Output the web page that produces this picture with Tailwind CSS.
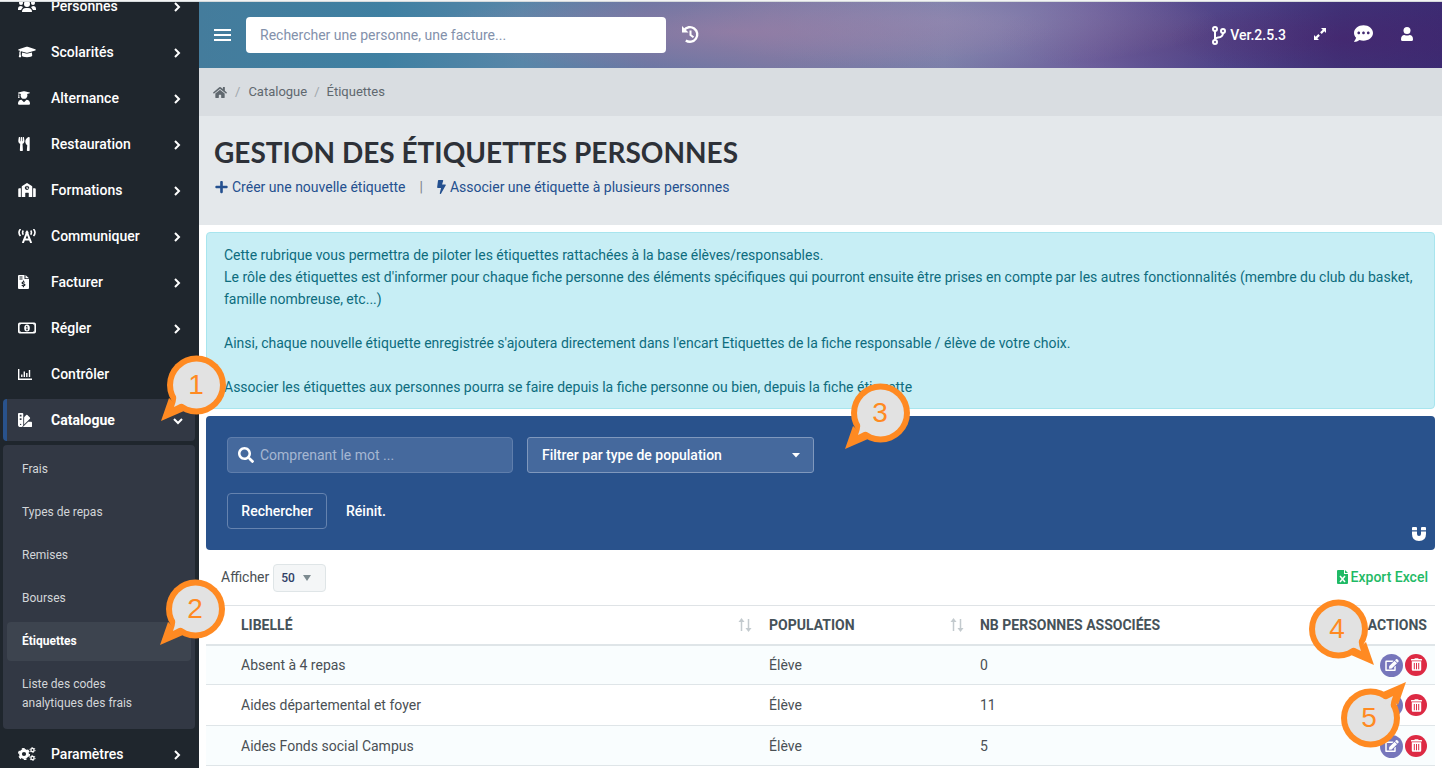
<!DOCTYPE html>
<html lang="fr">
<head>
<meta charset="utf-8">
<title>Gestion des étiquettes personnes</title>
<script src="https://cdn.jsdelivr.net/npm/@tailwindcss/browser@4"></script>
</head>
<body class="relative flex h-screen flex-col overflow-hidden bg-white font-['Roboto',sans-serif] text-sm text-[#4a5055]">
<svg class="hidden">
  <symbol id="chev" viewBox="0 0 8 10"><path d="M2 1l4 4-4 4" fill="none" stroke="currentColor" stroke-width="2"/></symbol>
  <symbol id="edit" viewBox="0 0 576 512"><path fill="currentColor" d="M402.6 83.2l90.2 90.2c3.8 3.8 3.8 10 0 13.8L274.4 405.6l-92.8 10.3c-12.4 1.4-22.9-9.1-21.5-21.5l10.3-92.8L388.8 83.2c3.8-3.8 10-3.8 13.8 0zm162-22.9l-48.8-48.8c-15.2-15.2-39.9-15.2-55.2 0l-35.4 35.4c-3.8 3.8-3.8 10 0 13.8l90.2 90.2c3.8 3.8 10 3.8 13.8 0l35.4-35.4c15.2-15.3 15.2-40 0-55.2zM384 346.2V448H64V128h229.8c3.2 0 6.2-1.3 8.5-3.5l40-40c7.6-7.6 2.2-20.5-8.500-20.500H48C21.500 64 0 85.500 0 112v352c0 26.500 21.500 48 48 48h352c26.500 0 48-21.500 48-48V306.200c0-10.700-12.900-16-20.500-8.500l-40 40c-2.200 2.300-3.500 5.300-3.500 8.500z"/></symbol>
  <symbol id="trash" viewBox="0 0 448 512"><path fill="currentColor" fill-rule="evenodd" d="M32 464a48 48 0 0 0 48 48h288a48 48 0 0 0 48-48V128H32zm262-270h40v256h-40zm-90 0h40v256h-40zm-90 0h40v256h-40zM432 32H312l-9.400-18.700A24 24 0 0 0 281.100 0H166.800a23.720 23.720 0 0 0-21.400 13.300L136 32H16A16 16 0 0 0 0 48v32a16 16 0 0 0 16 16h416a16 16 0 0 0 16-16V48a16 16 0 0 0-16-16z"/></symbol>
  <symbol id="sort" viewBox="0 0 14 14"><path d="M3.500 13V3M10.500 1v10" stroke="#c3cace" stroke-width="1.500" fill="none"/><path d="M3.500 0L6.500 4h-6zM10.500 14l3-4h-6z" fill="#c3cace"/></symbol>
  <symbol id="bubble" viewBox="0 0 68 68"><path d="M9 43L1 66l23-10z" fill="#ff8a22"/><circle cx="36.500" cy="30" r="29.500" fill="#ff8a22"/><circle cx="36.500" cy="30" r="23.500" fill="#e2e2e2"/><path d="M15 37q3 5-1 15l6-3q3-1 8 2z" fill="#e2e2e2"/></symbol>
</svg>

<div class="h-[2px] shrink-0 border-b border-[#d5dadc] bg-[#f3f4f4]"></div>
<div class="flex min-h-0 flex-1">

<aside class="w-[199px] shrink-0 overflow-hidden bg-[#1f262d] text-white">
<nav class="-mt-[19px] font-medium">
  <a href="#" class="flex h-[46px] items-center px-[18px]"><svg class="h-4 w-[18px]" viewBox="0 0 18 16" fill="currentColor"><circle cx="3" cy="5" r="2"/><circle cx="15" cy="5" r="2"/><circle cx="9" cy="6" r="3"/><path d="M0 11q0-3 3-3l2 1-2 3H0zM18 11q0-3-3-3l-2 1 2 3h3zM4 14q0-4 4-4h2q4 0 4 4H4z"/></svg><span class="ml-[15px] flex-1">Personnes</span><svg class="mt-[2px] h-[10px] w-2"><use href="#chev"/></svg></a>
  <a href="#" class="flex h-[46px] items-center px-[18px]"><svg class="h-[14px] w-[18px]" viewBox="0 0 640 512" fill="currentColor"><path d="M622.340 153.200L343.400 67.500c-15.200-4.670-31.600-4.670-46.790 0L17.660 153.200c-23.540 7.230-23.540 38.360 0 45.590l48.630 14.940c-10.670 13.190-17.230 29.280-17.880 46.900C38.780 266.150 32 276.110 32 288c0 10.780 5.680 19.850 13.860 25.650L20.330 428.530C18.110 438.520 25.710 448 35.940 448h56.110c10.240 0 17.840-9.480 15.620-19.470L82.140 313.650C90.320 307.850 96 298.780 96 288c0-11.570-6.470-21.250-15.660-26.870.76-15.020 8.440-28.300 20.690-36.720L296.600 284.500c9.060 2.780 26.440 6.250 46.790 0l278.950-85.700c23.550-7.240 23.550-38.360 0-45.600zM352.790 315.090c-28.530 8.760-52.840 3.920-65.590 0l-145.020-44.550L128 384c0 35.350 85.960 64 192 64s192-28.650 192-64l-14.180-113.470-145.030 44.560z"/></svg><span class="ml-[15px] flex-1">Scolarités</span><svg class="mt-[2px] h-[10px] w-2"><use href="#chev"/></svg></a>
  <a href="#" class="flex h-[46px] items-center px-[18px]"><span class="w-[18px]"><svg class="h-[14px] w-3" viewBox="0 0 448 512" fill="currentColor"><path d="M319.400 320.600L224 416l-95.400-95.400C57.100 323.700 0 382.200 0 454.400v9.600c0 26.500 21.500 48 48 48h352c26.500 0 48-21.500 48-48v-9.600c0-72.200-57.100-130.700-128.600-133.800zM13.600 79.800l6.400 1.500v58.400c-7 4.200-12 11.500-12 20.300 0 8.400 4.600 15.400 11.100 19.700L3.500 242c-1.700 6.900 2.100 14 7.600 14h41.800c5.500 0 9.300-7.100 7.600-14l-15.600-62.300C51.400 175.400 56 168.400 56 160c0-8.800-5-16.100-12-20.300V87.100l66 15.900c-8.600 17.200-14 36.400-14 57 0 70.700 57.300 128 128 128s128-57.300 128-128c0-20.600-5.300-39.800-14-57l96.300-23.200c18.200-4.400 18.200-27.100 0-31.500l-190.400-46c-13-3.100-26.700-3.100-39.700 0L13.600 48.200c-18.100 4.400-18.100 27.200 0 31.600z"/></svg></span><span class="ml-[15px] flex-1">Alternance</span><svg class="mt-[2px] h-[10px] w-2"><use href="#chev"/></svg></a>
  <a href="#" class="flex h-[46px] items-center px-[18px]"><span class="w-[18px]"><svg class="h-[14px] w-3" viewBox="0 0 416 512" fill="currentColor"><path d="M207.900 15.200c.8 4.700 16.100 94.500 16.100 128.800 0 52.300-27.800 89.600-68.900 104.600L168 486.700c.7 13.700-10.200 25.300-24 25.300H80c-13.700 0-24.700-11.500-24-25.300l12.900-238.100C27.700 233.600 0 196.200 0 144 0 109.600 15.300 19.900 16.100 15.200 19.300-5.100 61.400-5.400 64 16.300v141.200c1.300 3.400 15.100 3.200 16 0 1.400-25.300 7.900-139.200 8-141.800 3.300-20.800 44.700-20.800 47.900 0 .2 2.700 6.600 116.500 8 141.800.9 3.200 14.800 3.400 16 0V16.300c2.600-21.600 44.800-21.400 48-1.100zm119.200 285.700l-15 185.100c-1.200 14 9.900 26 23.900 26h56c13.300 0 24-10.700 24-24V24c0-13.200-10.700-24-24-24-82.500 0-221.400 178.500-64.900 300.900z"/></svg></span><span class="ml-[15px] flex-1">Restauration</span><svg class="mt-[2px] h-[10px] w-2"><use href="#chev"/></svg></a>
  <a href="#" class="flex h-[46px] items-center px-[18px]"><svg class="h-[14px] w-[18px]" viewBox="0 0 640 512" fill="currentColor"><path d="M0 224v272c0 8.840 7.160 16 16 16h80V192H32c-17.670 0-32 14.330-32 32zm360-48h-24v-40c0-4.420-3.580-8-8-8h-16c-4.420 0-8 3.580-8 8v64c0 4.420 3.580 8 8 8h48c4.420 0 8-3.580 8-8v-16c0-4.420-3.580-8-8-8zm137.750-63.960l-160-106.670a32.020 32.020 0 0 0-35.500 0l-160 106.670A32.002 32.002 0 0 0 128 138.660V512h128V368c0-8.840 7.160-16 16-16h96c8.840 0 16 7.160 16 16v144h128V138.670c0-10.700-5.350-20.700-14.250-26.630zM320 256c-44.180 0-80-35.820-80-80s35.820-80 80-80 80 35.820 80 80-35.820 80-80 80zm288-64h-64v320h80c8.840 0 16-7.160 16-16V224c0-17.670-14.330-32-32-32z"/></svg><span class="ml-[15px] flex-1">Formations</span><svg class="mt-[2px] h-[10px] w-2"><use href="#chev"/></svg></a>
  <a href="#" class="flex h-[46px] items-center px-[18px]"><svg class="h-[14px] w-[18px]" viewBox="0 0 18 14" fill="none" stroke="currentColor" stroke-width="1.600"><path d="M2.500 0q-3 3.500 0 7M5.300 1.500q-1.500 2 0 4.300M15.500 0q3 3.500 0 7M12.700 1.500q1.500 2 0 4.300"/><path d="M4.800 14L9 3.500 13.200 14M6.500 10.500h5" stroke-width="2"/><circle cx="9" cy="3.500" r="1.500" fill="currentColor" stroke="none"/></svg><span class="ml-[15px] flex-1">Communiquer</span><svg class="mt-[2px] h-[10px] w-2"><use href="#chev"/></svg></a>
  <a href="#" class="flex h-[46px] items-center px-[18px]"><span class="w-[18px]"><svg class="h-[14px] w-[11px]" viewBox="0 0 11 14" fill="currentColor"><path fill-rule="evenodd" d="M1 0h5.500v4H11v9q0 1-1 1H1q-1 0-1-1V1q0-1 1-1zm.5 1.500v1h3v-1zm0 2v1h3v-1zM5 5.500v1Q3.500 6.800 3.500 8q0 .8 1.300 1.200 1.700.3.900.9-.7.300-1.700-.3l-.5.900q.8.500 1.500.6v1h1v-1q1.500-.3 1.500-1.500 0-1-1.500-1.300-1.600-.4-.8-.9.600-.3 1.300.1l.5-.8L6 6.500v-1z"/><path d="M7.500 0L11 3.200H7.500z"/></svg></span><span class="ml-[15px] flex-1">Facturer</span><svg class="mt-[2px] h-[10px] w-2"><use href="#chev"/></svg></a>
  <a href="#" class="flex h-[46px] items-center px-[18px]"><svg class="h-3 w-[18px]" viewBox="0 0 18 12"><rect x=".8" y="1.300" width="16.400" height="9.400" rx="1" fill="none" stroke="currentColor" stroke-width="1.600"/><path d="M1 3.500L3.500 1M14.500 1L17 3.500M1 8.500L3.500 11M14.500 11L17 8.500" stroke="currentColor"/><ellipse cx="9" cy="6" rx="2.800" ry="3.500" fill="currentColor"/><path d="M8 4.700l1-.5v3.500M8 7.700h2" stroke="#1f262d" stroke-width=".9" fill="none"/></svg><span class="ml-[15px] flex-1">Régler</span><svg class="mt-[2px] h-[10px] w-2"><use href="#chev"/></svg></a>
  <a href="#" class="flex h-[46px] items-center px-[18px]"><span class="w-[18px]"><svg class="h-3 w-[14px]" viewBox="0 0 14 12" fill="none" stroke="currentColor" stroke-width="1.400"><path d="M.7 1v10.300H14M3.800 9V6.500M6.300 9V3.500M8.800 9V5M11.500 9V2"/></svg></span><span class="ml-[15px] flex-1">Contrôler</span></a>
  <a href="#" class="mx-[3px] my-[2px] mr-1 flex h-[42px] items-center rounded-[4px] border-l-4 border-[#29528c] bg-[#323844] pr-[13px] pl-[11px] font-bold"><span class="w-[18px]"><svg class="h-[14px] w-[14px]" viewBox="0 0 512 512" fill="currentColor"><path d="M434.660,167.710h0L344.500,77.360a31.830,31.830,0,0,0-45-.07h0l-.07.07L224,152.880V424L434.660,212.900A32,32,0,0,0,434.660,167.710ZM480,320H373.090L186.680,506.510c-2.060,2.070-4.500,3.580-6.680,5.490H480a32,32,0,0,0,32-32V352A32,32,0,0,0,480,320ZM192,32A32,32,0,0,0,160,0H32A32,32,0,0,0,0,32V416a96,96,0,0,0,192,0ZM96,440a24,24,0,1,1,24-24A24,24,0,0,1,96,440Zm32-184H64V192h64Zm0-128H64V64h64Z"/></svg></span><span class="ml-[15px] flex-1">Catalogue</span><svg class="mt-[2px] h-[10px] w-2 rotate-90"><use href="#chev"/></svg></a>
  <div class="mt-1 mr-1 mb-[2px] ml-[3px] flex flex-col gap-1 rounded-[4px] bg-[#323844] px-1 pt-[5px] pb-[6px] text-xs leading-[19px] font-normal text-[#d3d6d9]">
    <a href="#" class="rounded-[4px] px-[15px] py-[10px]">Frais</a>
    <a href="#" class="rounded-[4px] px-[15px] py-[10px]">Types de repas</a>
    <a href="#" class="rounded-[4px] px-[15px] py-[10px]">Remises</a>
    <a href="#" class="rounded-[4px] px-[15px] py-[10px]">Bourses</a>
    <a href="#" class="rounded-[4px] bg-[#3d444f] px-[15px] py-[10px] font-bold text-white">Étiquettes</a>
    <a href="#" class="rounded-[4px] px-[15px] py-[10px]">Liste des codes<br>analytiques des frais</a>
  </div>
  <a href="#" class="flex h-[46px] items-center px-[18px]"><svg class="h-[14px] w-[18px]" viewBox="0 0 18 14" fill="none" stroke="currentColor"><circle cx="6" cy="7" r="3.500" stroke-width="2.800"/><circle cx="6" cy="7" r="5.300" stroke-width="1.600" stroke-dasharray="2.780 2.780"/><circle cx="14.500" cy="3" r="1.600" stroke-width="1.300"/><circle cx="14.500" cy="3" r="2.600" stroke-width=".9" stroke-dasharray="1.360 1.360"/><circle cx="14.500" cy="11" r="1.600" stroke-width="1.300"/><circle cx="14.500" cy="11" r="2.600" stroke-width=".9" stroke-dasharray="1.360 1.360"/></svg><span class="ml-[15px] flex-1">Paramètres</span><svg class="mt-[2px] h-[10px] w-2"><use href="#chev"/></svg></a>
</nav>
</aside>

<main class="min-w-0 flex-1">
  <header class="flex h-[66px] items-center bg-[radial-gradient(ellipse_26%_60%_at_43%_45%,#a07ea499,transparent),radial-gradient(ellipse_22%_70%_at_60%_30%,#948db599,transparent),radial-gradient(ellipse_14%_60%_at_92%_55%,#48206a80,transparent),radial-gradient(ellipse_14%_60%_at_78%_50%,#63407a66,transparent),linear-gradient(90deg,#447c9c_0%,#3f80a2_15%,#5886a8_26%,#6b76a3_36%,#7878a3_46%,#7c7fa9_60%,#6c5f9c_72%,#4e458a_82%,#3f3277_92%,#3c2b72_100%)] pr-[29px] pl-[15px] text-white">
    <button aria-label="Menu" class="w-[17px]"><svg class="h-3 w-[17px]" viewBox="0 0 17 12" stroke="currentColor" stroke-width="2"><path d="M0 1h17M0 6h17M0 11h17"/></svg></button>
    <input type="text" aria-label="Rechercher" placeholder="Rechercher une personne, une facture..." class="ml-[15px] h-9 w-[420px] rounded-[4px] bg-white px-[14px] text-sm text-[#4a5055] outline-none placeholder:text-[#8391ab]">
    <button aria-label="Historique" class="ml-[15px] pb-[2px]"><svg class="h-[19px] w-[19px]" viewBox="0 0 19 19" fill="none" stroke="currentColor" stroke-width="2.400"><path d="M3 5.200A7.300 7.300 0 1 1 4.800 15.400"/><path d="M9.500 5.500V10l3 2.200" stroke-width="2"/><path d="M1 1l6.500 6.500H1z" fill="currentColor" stroke="none"/></svg></button>
    <div class="ml-auto flex items-center">
      <a href="#" class="flex items-center gap-1"><svg class="h-[19px] w-[14px]" viewBox="0 0 14 19" fill="none" stroke="currentColor" stroke-width="2"><circle cx="3" cy="3" r="2"/><circle cx="3" cy="16" r="2"/><circle cx="11" cy="5" r="2"/><path d="M3 5v9M11 7q0 4-5 4.500-2.500.3-3 2"/></svg><span class="font-medium">Ver.2.5.3</span></a>
      <button aria-label="Plein écran" class="ml-[27px] pb-[2px]"><svg class="h-[14px] w-[14px]" viewBox="0 0 14 14" fill="currentColor"><path d="M8 1h5v5l-1.700-1.700-2.600 2.600-1.600-1.600 2.600-2.600zM6 13H1V8l1.700 1.700 2.600-2.600 1.600 1.600-2.600 2.600z"/></svg></button>
      <button aria-label="Messages" class="ml-[27px] pb-[3px]"><svg class="h-[19px] w-[19px]" viewBox="0 0 512 512" fill="currentColor"><path d="M256 32C114.600 32 0 125.100 0 240c0 49.600 21.400 95 57 130.700C44.500 421.100 2.700 466 2.200 466.500c-2.200 2.300-2.800 5.700-1.500 8.700S4.800 480 8 480c66.300 0 116-31.800 140.600-51.400 32.700 12.300 69 19.400 107.400 19.400 141.400 0 256-93.100 256-208S397.400 32 256 32zM128 276c-20 0-36-16-36-36s16-36 36-36 36 16 36 36-16 36-36 36zm128 0c-20 0-36-16-36-36s16-36 36-36 36 16 36 36-16 36-36 36zm128 0c-20 0-36-16-36-36s16-36 36-36 36 16 36 36-16 36-36 36z"/></svg></button>
      <button aria-label="Compte" class="ml-[28px] pb-[2px]"><svg class="h-[14px] w-3" viewBox="0 0 12 14" fill="currentColor"><circle cx="6" cy="3.500" r="3.500"/><path d="M0 12.500Q0 8 3.500 8q2.500 1 5 0Q12 8 12 12.500q0 1.500-1.500 1.500h-9Q0 14 0 12.500z"/></svg></button>
    </div>
  </header>

  <nav aria-label="Fil d'Ariane" class="flex h-12 items-center bg-[#d9dde1] pl-[14px] text-[13px] text-[#60686f]">
    <a href="#" aria-label="Accueil"><svg class="h-[13px] w-[14px]" viewBox="0 0 576 512" fill="currentColor"><path d="M280.370 148.260L96 300.110V464a16 16 0 0 0 16 16l112.060-.29a16 16 0 0 0 15.920-16V368a16 16 0 0 1 16-16h64a16 16 0 0 1 16 16v95.640a16 16 0 0 0 16 16.050L464 480a16 16 0 0 0 16-16V300L295.670 148.260a12.190 12.190 0 0 0-15.300 0zM571.600 251.470L488 182.560V44.050a12 12 0 0 0-12-12h-56a12 12 0 0 0-12 12v72.610L318.470 43a48 48 0 0 0-61 0L4.340 251.470a12 12 0 0 0-1.600 16.900l25.500 31A12 12 0 0 0 45.150 301l235.220-193.740a12.190 12.190 0 0 1 15.300 0L530.900 301a12 12 0 0 0 16.900-1.600l25.500-31a12 12 0 0 0-1.700-16.930z"/></svg></a>
    <span class="mx-2 text-[#a0a6ab]">/</span><a href="#">Catalogue</a><span class="mx-[7px] text-[#a0a6ab]">/</span><span>Étiquettes</span>
  </nav>

  <section class="h-[109px] bg-[#e4e8eb] pt-[18px] pl-[15px]">
    <h1 class="font-['Lato',sans-serif] text-[28px] leading-9 font-bold text-[#2d3138]">GESTION DES ÉTIQUETTES PERSONNES</h1>
    <div class="mt-[7px] flex items-center leading-5 text-[#24508f]">
      <a href="#" class="flex items-center gap-1 pl-[1px]"><svg class="h-[14px] w-[13px]" viewBox="0 0 448 512" fill="currentColor"><path d="M416 208H272V64c0-17.670-14.330-32-32-32h-32c-17.670 0-32 14.330-32 32v144H32c-17.670 0-32 14.330-32 32v32c0 17.670 14.330 32 32 32h144v144c0 17.670 14.330 32 32 32h32c17.670 0 32-14.330 32-32V304h144c17.670 0 32-14.330 32-32v-32c0-17.670-14.330-32-32-32z"/></svg>Créer une nouvelle étiquette</a>
      <span class="mx-[14px] text-[#7d858c]">|</span>
      <a href="#" class="flex items-center gap-1"><svg class="h-[14px] w-[9px]" viewBox="0 0 320 512" fill="currentColor"><path d="M296 160H180.600l42.600-129.800C227.200 15 215.700 0 200 0H56C44 0 33.800 8.900 32.200 20.800l-32 240C-1.700 275.200 9.500 288 24 288h118.700L96.600 482.500c-3.600 15.200 8 29.500 23.300 29.500 8.400 0 16.400-4.400 20.800-12l176-304c9.300-15.900-2.200-36-20.700-36z"/></svg>Associer une étiquette à plusieurs personnes</a>
    </div>
  </section>

  <div class="px-[7px] pt-[7px]">
    <div class="rounded-[4px] border border-[#a8e5ee] bg-[#c7eef5] pr-[18px] pl-[17px] pt-[11px] pb-[10px] leading-[22px] text-[#0d6c7e]">Cette rubrique vous permettra de piloter les étiquettes rattachées à la base élèves/responsables.<br>Le rôle des étiquettes est d'informer pour chaque fiche personne des éléments spécifiques qui pourront ensuite être prises en compte par les autres fonctionnalités (membre du club du basket, famille nombreuse, etc...)<br><br>Ainsi, chaque nouvelle étiquette enregistrée s'ajoutera directement dans l'encart Etiquettes de la fiche responsable / élève de votre choix.<br><br>Associer les étiquettes aux personnes pourra se faire depuis la fiche personne ou bien, depuis la fiche étiquette</div>

    <form class="mt-[7px] flex h-[134px] items-end rounded-[4px] bg-[#29528c] pt-[21px] pr-[9px] pb-[9px] pl-[21px] font-medium text-white">
      <div class="flex-1 self-start">
        <div class="flex gap-[14px]">
          <label class="flex h-9 w-[286px] items-center gap-[6px] rounded-[4px] border border-[#5f7eac] bg-[#45699d] pl-[10px]"><svg class="h-4 w-4 shrink-0" viewBox="0 0 512 512" fill="currentColor"><path d="M505 442.700L405.300 343c-4.500-4.500-10.600-7-17-7H372c27.600-35.300 44-79.700 44-128C416 93.100 322.900 0 208 0S0 93.100 0 208s93.100 208 208 208c48.300 0 92.700-16.400 128-44v16.300c0 6.400 2.500 12.500 7 17l99.700 99.700c9.400 9.400 24.600 9.400 33.900 0l28.300-28.300c9.400-9.400 9.400-24.600.1-34zM208 336c-70.700 0-128-57.200-128-128 0-70.700 57.200-128 128-128 70.700 0 128 57.200 128 128 0 70.700-57.200 128-128 128z"/></svg><input type="text" aria-label="Comprenant le mot" placeholder="Comprenant le mot ..." class="min-w-0 flex-1 bg-transparent text-sm font-normal outline-none placeholder:text-[#a5b7d2]"></label>
          <div class="relative"><select aria-label="Filtrer par type de population" class="h-9 w-[287px] appearance-none rounded-[3px] border border-[#7f98bd] bg-[#45699d] px-[14px] text-sm font-medium text-white"><option>Filtrer par type de population</option><option>Élève</option></select><svg class="pointer-events-none absolute top-4 right-[14px] h-[5px] w-2" viewBox="0 0 8 5"><path d="M0 0h8L4 4.500z" fill="#fff"/></svg></div>
        </div>
        <div class="mt-5 flex items-center gap-[5px]">
          <button type="submit" class="h-9 w-[100px] rounded-[4px] border border-[#6583af]">Rechercher</button>
          <button type="reset" class="h-9 px-[14px]">Réinit.</button>
        </div>
      </div>
      <button type="button" aria-label="Aimanter"><svg class="h-[14px] w-[14px]" viewBox="0 0 14 14" fill="currentColor"><path d="M0 1q0-1 1-1h3q1 0 1 1v2.300H0zM9 1q0-1 1-1h3q1 0 1 1v2.300H9zM0 4.600h5V7q0 2 2 2t2-2V4.600h5V7q0 7-7 7T0 7z"/></svg></button>
    </form>

    <div class="flex h-[55px] items-center justify-between pr-[7px] pb-[2px] pl-[15px]">
      <label class="flex items-center gap-1">Afficher
        <span class="relative mt-[3px]"><select class="block h-7 w-[53px] appearance-none rounded-[4px] border border-[#dfe5e7] bg-[#f4f6f7] px-[7px] text-xs font-medium text-[#2f3f66]"><option>50</option><option>100</option></select><svg class="pointer-events-none absolute top-[11px] right-[15px] h-[6px] w-2" viewBox="0 0 8 6"><path d="M0 0h8L4 6z" fill="#7d8b90"/></svg></span>
      </label>
      <a href="#" class="flex items-center gap-[3px] font-medium text-[#1fba66]"><svg class="h-[14px] w-[11px]" viewBox="0 0 11 14"><path d="M1 0h6v4h4v9q0 1-1 1H1q-1 0-1-1V1q0-1 1-1z" fill="currentColor"/><path d="M8 0l3 3H8z" fill="currentColor"/><path d="M3 6l5 6M8 6l-5 6" stroke="#fff" stroke-width="1.500"/></svg>Export Excel</a>
    </div>

    <table class="w-full table-fixed border-collapse text-left">
      <thead class="border-t border-b-2 border-[#dfe5e8] border-t-[#dfe3e6] text-[#465259]">
        <tr class="h-[39px]">
          <th class="w-[45%] pl-[35px] font-bold"><span class="flex items-center justify-between pr-[7px]">LIBELLÉ<svg class="h-[14px] w-[14px]"><use href="#sort"/></svg></span></th>
          <th class="w-[17%] pl-[10px] font-bold"><span class="flex items-center justify-between pr-1">POPULATION<svg class="h-[14px] w-[14px]"><use href="#sort"/></svg></span></th>
          <th class="pl-3 font-bold">NB PERSONNES ASSOCIÉES</th>
          <th class="w-[20%] pr-2 text-right font-bold">ACTIONS</th>
        </tr>
      </thead>
      <tbody>
        <tr class="h-[40px] border-b border-[#dfe5e8] bg-[#f9fdfe]"><td class="pl-[35px]">Absent à 4 repas</td><td class="pl-[10px]">Élève</td><td class="pl-3">0</td><td class="pt-[1px] pr-2"><div class="flex justify-end gap-[2px] text-white"><button aria-label="Modifier" class="flex h-[23px] w-[23px] items-center justify-center rounded-full bg-[#7676bb]"><svg class="h-3 w-[14px]"><use href="#edit"/></svg></button><button aria-label="Supprimer" class="flex h-[22px] w-[22px] items-center justify-center rounded-full bg-[#dd2a44]"><svg class="h-[13px] w-[11px]"><use href="#trash"/></svg></button></div></td></tr>
        <tr class="h-[41px] border-b border-[#dfe5e8]"><td class="pl-[35px]">Aides départemental et foyer</td><td class="pl-[10px]">Élève</td><td class="pl-3">11</td><td class="pt-[1px] pr-2"><div class="flex justify-end gap-[2px] text-white"><button aria-label="Modifier" class="flex h-[23px] w-[23px] items-center justify-center rounded-full bg-[#7676bb]"><svg class="h-3 w-[14px]"><use href="#edit"/></svg></button><button aria-label="Supprimer" class="flex h-[22px] w-[22px] items-center justify-center rounded-full bg-[#dd2a44]"><svg class="h-[13px] w-[11px]"><use href="#trash"/></svg></button></div></td></tr>
        <tr class="h-[40px] border-b border-[#dfe5e8] bg-[#f9fdfe]"><td class="pl-[35px]">Aides Fonds social Campus</td><td class="pl-[10px]">Élève</td><td class="pl-3">5</td><td class="pt-[1px] pr-2"><div class="flex justify-end gap-[2px] text-white"><button aria-label="Modifier" class="flex h-[23px] w-[23px] items-center justify-center rounded-full bg-[#7676bb]"><svg class="h-3 w-[14px]"><use href="#edit"/></svg></button><button aria-label="Supprimer" class="flex h-[22px] w-[22px] items-center justify-center rounded-full bg-[#dd2a44]"><svg class="h-[13px] w-[11px]"><use href="#trash"/></svg></button></div></td></tr>
      </tbody>
    </table>
  </div>
</main>
</div>

<div class="pointer-events-none font-['Liberation_Sans',sans-serif] text-[28px] leading-[60px] text-[#ff8a22]">
  <div class="absolute top-[355px] left-[160px] h-[68px] w-[68px]"><svg class="absolute inset-0 h-full w-full"><use href="#bubble"/></svg><span class="relative block pl-1 text-center">1</span></div>
  <div class="absolute top-[579px] left-[159px] h-[68px] w-[68px]"><svg class="absolute inset-0 h-full w-full"><use href="#bubble"/></svg><span class="relative block pl-1 text-center">2</span></div>
  <div class="absolute top-[383px] left-[844px] h-[68px] w-[68px]"><svg class="absolute inset-0 h-full w-full"><use href="#bubble"/></svg><span class="relative block pl-1 text-center">3</span></div>
  <div class="absolute top-[599px] right-[67px] h-[68px] w-[68px]"><svg class="absolute inset-0 h-full w-full -scale-x-100"><use href="#bubble"/></svg><span class="relative block pr-2 text-center">4</span></div>
  <div class="absolute top-[680px] right-[35px] h-[68px] w-[68px]"><svg class="absolute inset-0 h-full w-full rotate-180"><use href="#bubble"/></svg><span class="relative block pt-2 pr-2 text-center">5</span></div>
</div>
</body>
</html>
